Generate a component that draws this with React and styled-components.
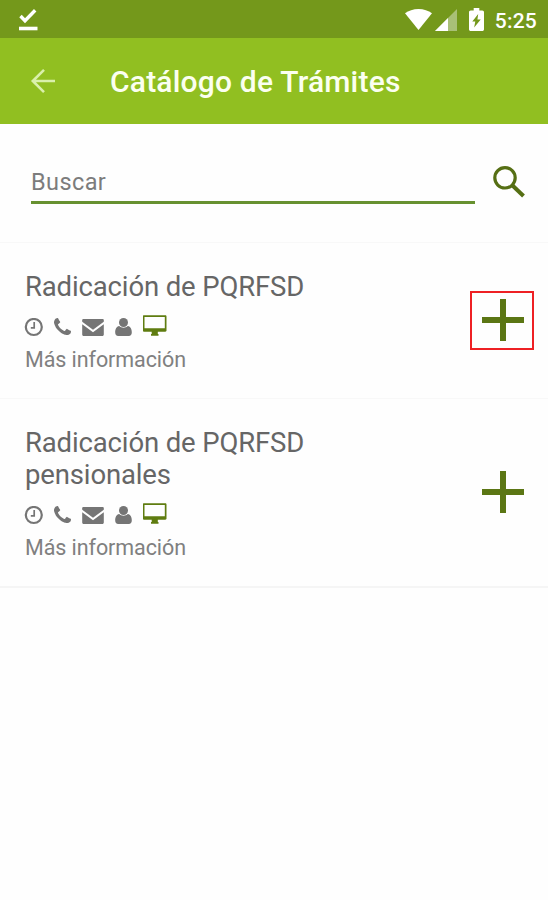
import styled, { createGlobalStyle } from "styled-components";

const GlobalStyle = createGlobalStyle`
  * {
    box-sizing: border-box;
  }
  body {
    margin: 0;
    background: #fff;
    font-family: Roboto, "Liberation Sans", sans-serif;
  }
  svg {
    display: block;
    flex: none;
  }
`;

const Screen = styled.div`
  display: flex;
  flex-direction: column;
  width: 548px;
  height: 900px;
  background: #fefefe;
  overflow: hidden;
`;

const StatusBar = styled.div`
  display: flex;
  align-items: center;
  justify-content: space-between;
  height: 38px;
  padding: 0 11px 0 18px;
  background: #74981b;
  color: #fff;
`;

const StatusIcons = styled.div`
  display: flex;
  align-items: center;
  padding-top: 1px;
`;

const Clock = styled.span`
  margin-left: 11px;
  padding-top: 2px;
  font-size: 21px;
  line-height: 24px;
  font-weight: 500;
  letter-spacing: 0.2px;
`;

const AppBar = styled.header`
  display: flex;
  align-items: center;
  height: 86px;
  padding: 0 0 0 30px;
  background: #91bf21;
`;

const AppTitle = styled.h1`
  margin: 2px 0 0 54px;
  color: #fbfff0;
  font-size: 30px;
  line-height: 36px;
  font-weight: 500;
  letter-spacing: 0.2px;
  white-space: nowrap;
`;

const SearchBar = styled.div`
  display: flex;
  height: 118px;
  padding: 41px 22px 0 31px;
`;

const SearchInput = styled.input`
  width: 444px;
  height: 39px;
  margin-right: 17px;
  padding: 0 0 2px;
  border: 0;
  border-bottom: 3px solid #679130;
  border-radius: 0;
  outline: none;
  background: transparent;
  font-family: inherit;
  font-size: 23.5px;
  letter-spacing: 0.4px;
  &::placeholder {
    color: #7c7c7c;
    opacity: 1;
  }
`;

const List = styled.ul`
  margin: 0;
  padding: 0;
  list-style: none;
  border-bottom: 2px solid #f5f5f5;
`;

const Item = styled.li`
  display: flex;
  align-items: center;
  justify-content: space-between;
  padding: 28px 14px 24px 25px;
  border-top: 1px solid #f8f8f8;
`;

const ItemTitle = styled.h2`
  width: 330px;
  margin: 0 0 12px;
  color: #666;
  font-size: 27.5px;
  line-height: 32px;
  font-weight: 400;
  letter-spacing: -0.14px;
`;

const Channels = styled.div`
  display: flex;
  align-items: flex-end;
  gap: 11px;
  height: 22px;
  margin-left: -1px;
  color: #757575;
`;

const MoreInfo = styled.a`
  display: block;
  margin-top: 9px;
  color: #808080;
  font-size: 21.5px;
  line-height: 28px;
  letter-spacing: -0.08px;
`;

const AddButton = styled.button`
  display: flex;
  align-items: center;
  justify-content: center;
  width: 64px;
  height: 59px;
  margin-bottom: 5px;
  padding: 0 0 0 2px;
  border: 2px solid ${(props) => (props.$highlighted ? "#ee2024" : "transparent")};
  background: transparent;
`;

const CheckIcon = () => (
  <svg width="20" height="23" viewBox="0 0 20 23" fill="none" stroke="#fff">
    <path d="M2.5 8 7 12.7 17.2 2.2" strokeWidth="3.4" />
    <path d="M1 20.5h18.5" strokeWidth="3.6" />
  </svg>
);

const WifiIcon = () => (
  <svg width="27" height="21" viewBox="0 0 27 21">
    <path fill="#fff" d="M13.5 21 0 4.3C3.6 1.6 8.2 0 13.5 0S23.4 1.6 27 4.3z" />
  </svg>
);

const SignalIcon = styled(({ className }) => (
  <svg className={className} width="22" height="22" viewBox="0 0 22 22">
    <path fill="#a9c077" d="M0 22 22 0v22z" />
    <path fill="#fff" d="M0 22 13 9v13z" />
  </svg>
))`
  margin: 0 12px 0 3px;
`;

const BatteryIcon = () => (
  <svg width="15" height="23" viewBox="0 0 16 23" preserveAspectRatio="none">
    <path
      fill="#fff"
      fillRule="evenodd"
      d="M5 0h6v2.4h3.2c1 0 1.8.8 1.8 1.8v17c0 1-.8 1.8-1.8 1.8H1.8C.8 23 0 22.2 0 21.2v-17C0 3.2.8 2.4 1.8 2.4H5zM9.800 6 3.500 13.500h3.200L5.500 19.500l7-8H9z"
    />
  </svg>
);

const BackIcon = () => (
  <svg width="26" height="26" viewBox="0 0 26 26" fill="none" stroke="#daf0ab" strokeWidth="2.6">
    <path d="M25 13H3M14 1.8 2.8 13 14 24.2" />
  </svg>
);

const SearchIcon = () => (
  <svg width="34" height="34" viewBox="0 0 34 34" fill="none" stroke="#566f14">
    <circle cx="13" cy="12.8" r="10.2" strokeWidth="3.2" />
    <path d="M20 20 31.500 31" strokeWidth="4" />
  </svg>
);

const ClockIcon = () => (
  <svg width="19" height="19" viewBox="0 0 19 19" fill="none" stroke="currentColor">
    <circle cx="9.8" cy="9" r="8" strokeWidth="2.2" />
    <path d="M10.200 4v5.800H6.800" strokeWidth="1.7" />
  </svg>
);

const PhoneIcon = () => (
  <svg width="17" height="19" viewBox="0 0 1408 1568" fill="currentColor">
    <path d="M1408 1112q0 27-10 70.500t-21 68.500q-21 50-122 106-94 51-186 51-27 0-53-3.500t-57.500-12.500-47-14.500-55.500-20.500-49-18q-98-35-175-83-127-79-264-216t-216-264q-48-77-83-175-3-9-18-49t-20.500-55.500-14.500-47-12.500-57.500-3.500-53q0-92 51-186 56-101 106-122 25-11 68.500-21t70.500-10q14 0 21 3 18 6 53 76 11 19 30 54t35 63.500 31 53.500q3 4 17.500 25t21.500 35.500 7 28.500q0 20-28.500 50t-62 55-62 53-28.500 46q0 9 5 22.500t8.500 20.500 14 24 11.500 19q76 137 174 235t235 174q2 1 19 11.500t24 14 20.500 8.500 22.500 5q18 0 46-28.500t53-62 55-62 50-28.500q14 0 28.500 7t35.500 21.500 25 17.500q25 15 53.500 31t63.500 35 54 30q70 35 76 53 3 7 3 21z" />
  </svg>
);

const MailIcon = () => (
  <svg width="22" height="18" viewBox="0 0 22 18" fill="currentColor">
    <path d="M1.500 0h19c.8 0 1.300.5 1.300 1.300v1.400L11 10.700.2 2.700V1.300C.2.500.7 0 1.500 0z" />
    <path d="M.2 5.300 11 13.200l10.800-7.900v10.200c0 .9-.6 1.500-1.500 1.500H1.700C.8 17 .2 16.400.2 15.500z" />
  </svg>
);

const PersonIcon = () => (
  <svg width="17" height="19" viewBox="0 0 17 19" fill="currentColor">
    <circle cx="8.5" cy="4.500" r="4.500" />
    <path d="M4.200 8C1.300 8.500.2 11.300.2 14.500c0 2 1.200 3.500 3 3.500h10.600c1.800 0 3-1.500 3-3.500 0-3.200-1.100-6-4-6.500-2.200 2.300-6.400 2.300-8.600 0z" />
  </svg>
);

const MonitorIcon = () => (
  <svg width="24" height="22" viewBox="0 0 24 22">
    <path
      fill="#5f7c10"
      fillRule="evenodd"
      d="M.9.300h21.400c.7 0 1.200.5 1.200 1.200v14c0 .7-.5 1.200-1.200 1.200H14.800v2.300h.7v1.800H8v-1.800h.7v-2.300H.9c-.7 0-1.200-.5-1.200-1.200v-14C-.3.800.2.300.9.300zM1.500 1.900v11.400h20.300V1.900z"
    />
  </svg>
);

const PlusIcon = () => (
  <svg width="44" height="44" viewBox="0 0 44 44" fill="none" stroke="#5b7614" strokeWidth="6">
    <path d="M1 22h42M22 1v42" />
  </svg>
);

const procedures = [
  { title: "Radicación de PQRFSD", highlighted: true },
  { title: "Radicación de PQRFSD pensionales", highlighted: false },
];

const Procedure = ({ title, highlighted }) => (
  <Item>
    <div>
      <ItemTitle>{title}</ItemTitle>
      <Channels>
        <ClockIcon />
        <PhoneIcon />
        <MailIcon />
        <PersonIcon />
        <MonitorIcon />
      </Channels>
      <MoreInfo>Más información</MoreInfo>
    </div>
    <AddButton $highlighted={highlighted} aria-label="Agregar">
      <PlusIcon />
    </AddButton>
  </Item>
);

const App = () => {
  return (
    <>
      <GlobalStyle />
      <Screen>
        <StatusBar>
          <CheckIcon />
          <StatusIcons>
            <WifiIcon />
            <SignalIcon />
            <BatteryIcon />
            <Clock>5:25</Clock>
          </StatusIcons>
        </StatusBar>
        <AppBar>
          <BackIcon />
          <AppTitle>Catálogo de Trámites</AppTitle>
        </AppBar>
        <SearchBar>
          <SearchInput placeholder="Buscar" />
          <SearchIcon />
        </SearchBar>
        <List>
          {procedures.map((item) => (
            <Procedure key={item.title} {...item} />
          ))}
        </List>
      </Screen>
    </>
  );
};

export default App;
